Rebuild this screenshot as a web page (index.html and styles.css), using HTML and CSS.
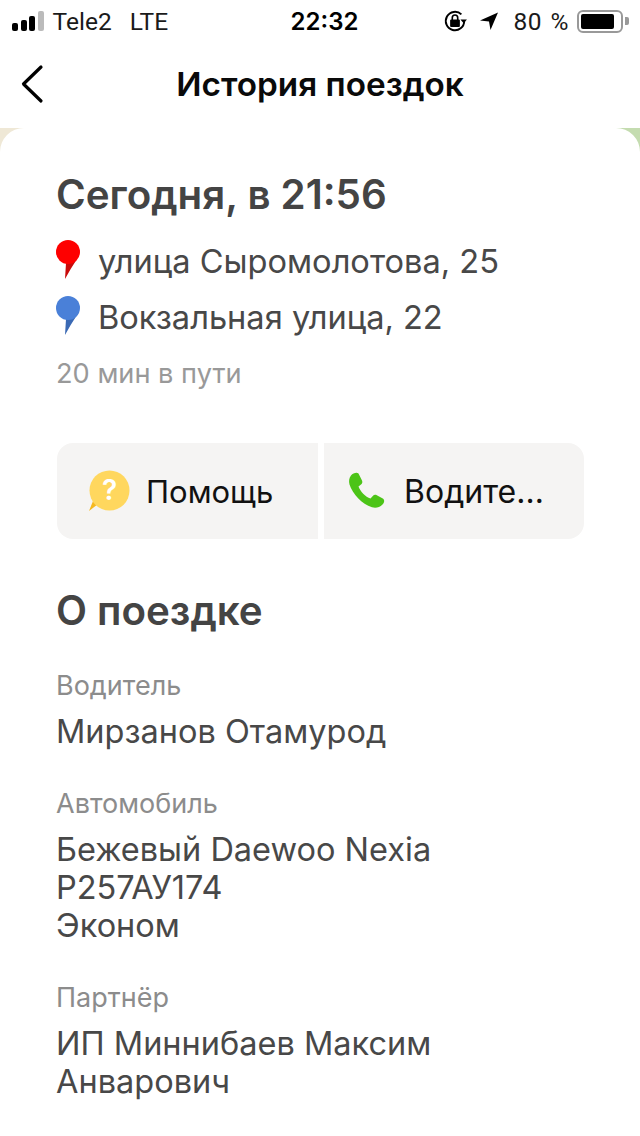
FILE: index.html
```html
<!DOCTYPE html>
<html lang="en">
<head>
    <meta charset="UTF-8">
    <meta name="viewport" content="width=device-width, initial-scale=1.0">
    <link rel="stylesheet" href="styles.css">
</head>
<body>
    <div class="phone">
        <div class="statusbar">
            <div class="status-left">
                <div class="signal"><i></i><i></i><i></i><i class="off"></i></div>
                <span class="carrier">Tele2</span>
                <span class="net">LTE</span>
            </div>
            <div class="clock">22:32</div>
            <div class="status-right">
                <svg class="lock" width="26" height="26" viewBox="0 0 24 24">
                    <path d="M20.500 12a8.500 8.500 0 1 1-2.600-6.100" fill="none" stroke="#000" stroke-width="1.800"/>
                    <path d="M17 10.500h6l-3 3.500z" fill="#000"/>
                    <rect x="7.500" y="10.500" width="9" height="7" rx="1" fill="#000"/>
                    <path d="M9.500 11V9a2.500 2.500 0 0 1 5 0v2" fill="none" stroke="#000" stroke-width="1.500"/>
                </svg>
                <svg class="arrow" width="20" height="20" viewBox="0 0 20 20">
                    <path d="M19 1.500 L1 9.500 L10 10.500 L11.500 19z" fill="#000"/>
                </svg>
                <span class="percent">80 %</span>
                <div class="battery"><div class="battery-fill"></div></div>
                <div class="battery-tip"></div>
            </div>
        </div>

        <div class="navbar">
            <svg class="back" width="26" height="40" viewBox="0 0 26 40">
                <path d="M21 3 L3.500 20 L21 37" fill="none" stroke="#000" stroke-width="3.200" stroke-linecap="round" stroke-linejoin="round"/>
            </svg>
            <h1>История поездок</h1>
        </div>

        <div class="map-strip">
            <div class="sheet">
                <h2 class="when">Сегодня, в 21:56</h2>

                <div class="route">
                    <svg class="pin" width="26" height="40" viewBox="0 0 26 40">
                        <path d="M11 23 L22 19 Q16 28 10 39z" fill="#c90a0a"/>
                        <circle cx="13" cy="12" r="12" fill="#fe0000"/>
                    </svg>
                    <span>улица Сыромолотова, 25</span>
                </div>
                <div class="route">
                    <svg class="pin" width="26" height="40" viewBox="0 0 26 40">
                        <path d="M11 23 L22 19 Q16 28 10 39z" fill="#3a69b4"/>
                        <circle cx="13" cy="12" r="12" fill="#4a80d8"/>
                    </svg>
                    <span>Вокзальная улица, 22</span>
                </div>
                <div class="duration">20 мин в пути</div>

                <div class="actions">
                    <div class="action action-help">
                        <svg width="42" height="42" viewBox="0 0 42 42">
                            <path d="M1 41l4-10h9z" fill="#f5b921"/>
                            <circle cx="21.500" cy="20.500" r="20" fill="#ffd75e"/>
                            <text class="qmark" x="21.500" y="30" text-anchor="middle">?</text>
                        </svg>
                        <span>Помощь</span>
                    </div>
                    <div class="action action-driver">
                        <svg width="38" height="38" viewBox="0 0 38 38">
                            <path d="M3 3.500C5 1 9 0 10.500 1.500l3.500 7c.7 1.600.3 3-1 4l-2.500 2c1.500 4.500 7 10.500 12 12l2.300-2.500c1-1.200 2.500-1.500 4-.8l6 3.300c2 1.200 1.800 4-.3 6-3 3-6.800 4-10.500 2.800C14 32 4.500 22 1.500 12.500.7 9 1 6 3 3.500z" fill="#4cc417"/>
                        </svg>
                        <span>Водите…</span>
                    </div>
                </div>

                <h2 class="about">О поездке</h2>

                <div class="info">
                    <div class="info-label">Водитель</div>
                    <div class="info-value">Мирзанов Отамурод</div>
                </div>
                <div class="info">
                    <div class="info-label">Автомобиль</div>
                    <div class="info-value">Бежевый Daewoo Nexia<br>Р257АУ174<br>Эконом</div>
                </div>
                <div class="info">
                    <div class="info-label">Партнёр</div>
                    <div class="info-value">ИП Миннибаев Максим<br>Анварович</div>
                </div>
            </div>
        </div>
    </div>
</body>
</html>
```

FILE: styles.css
```css
* {
    box-sizing: border-box;
}
html, body {
    margin: 0;
    padding: 0;
    background: #fff;
}
body {
    font-family: Inter, "Liberation Sans", Arial, sans-serif;
    width: 640px;
    height: 1136px;
    overflow: hidden;
}
.phone {
    display: flex;
    flex-direction: column;
    height: 1136px;
}

/* status bar */
.statusbar {
    flex-shrink: 0;
    height: 42px;
    display: flex;
    align-items: center;
    justify-content: space-between;
    padding: 0 11px 0 12px;
    font-family: Roboto, "Liberation Sans", sans-serif;
    font-size: 24.500px;
    color: #1a1a1a;
}
.status-left {
    width: 258px;
    display: flex;
    align-items: center;
}
.signal {
    display: flex;
    align-items: flex-end;
    gap: 2.500px;
    height: 20px;
    margin-right: 9px;
}
.signal i {
    width: 6px;
    background: #000;
    border-radius: 2px;
}
.signal i:nth-child(1) { height: 8px; }
.signal i:nth-child(2) { height: 11px; }
.signal i:nth-child(3) { height: 15px; }
.signal i:nth-child(4) { height: 20px; }
.signal .off {
    background: #bbb;
}
.net {
    margin-left: 18px;
}
.clock {
    font-family: Inter, "Liberation Sans", sans-serif;
    font-size: 24px;
    font-weight: 600;
    color: #000;
}
.status-right {
    width: 250px;
    display: flex;
    align-items: center;
    justify-content: flex-end;
}
.lock {
    margin-right: 11px;
}
.arrow {
    margin-right: 14px;
}
.percent {
    letter-spacing: 0.500px;
    word-spacing: 2px;
}
.battery {
    width: 46px;
    height: 23px;
    margin-left: 8px;
    border: 2px solid #999;
    border-radius: 6px;
    padding: 2px;
}
.battery-fill {
    width: 86%;
    height: 100%;
    background: #000;
    border-radius: 2px;
}
.battery-tip {
    width: 4px;
    height: 8px;
    margin-left: 2px;
    background: #999;
    border-radius: 0 2px 2px 0;
}

/* nav */
.navbar {
    flex-shrink: 0;
    height: 86px;
    padding-bottom: 2px;
    display: flex;
    align-items: center;
    justify-content: center;
    position: relative;
}
.navbar h1 {
    margin: 0;
    font-size: 33.300px;
    font-weight: 600;
    color: #0a0a0a;
}
.back {
    position: absolute;
    left: 20px;
    top: 22px;
}

/* sheet over the map */
.map-strip {
    flex: 1;
    min-height: 0;
    background: linear-gradient(90deg, #efe8d6 0, #efe8d6 50%, #c4dcb0 50%, #c4dcb0 100%);
}
.sheet {
    height: 100%;
    background: #fff;
    border-radius: 24px 24px 0 0;
    padding: 42px 56px 0 56px;
}
.when {
    margin: 0 0 13px;
    font-size: 40.300px;
    line-height: 50px;
    font-weight: 600;
    color: #444;
}
.route {
    height: 56px;
    display: flex;
    align-items: center;
    font-size: 32.600px;
    color: #484848;
}
.pin {
    margin: 0 17px 2px -1px;
}
.duration {
    margin-top: 11px;
    font-size: 27.200px;
    line-height: 36px;
    color: #999;
}
.actions {
    display: flex;
    gap: 6px;
    margin: 51px 0 0 1px;
}
.action {
    height: 96px;
    display: flex;
    align-items: center;
    background: #f5f4f3;
    font-size: 31px;
    color: #111;
}
.action-help {
    width: 261px;
    border-radius: 16px 0 0 16px;
    padding-left: 31px;
}
.action-help span {
    margin-left: 16px;
}
.action-driver {
    width: 260px;
    border-radius: 0 16px 16px 0;
    padding-left: 24px;
}
.action-driver span {
    margin-left: 18px;
    font-size: 32px;
}
.qmark {
    font-size: 28px;
    font-weight: 600;
    fill: #fff;
}
.about {
    margin: 47px 0 34px;
    font-size: 40.300px;
    line-height: 50px;
    font-weight: 600;
    color: #444;
}
.info {
    margin-bottom: 37px;
}
.info-label {
    font-size: 27px;
    line-height: 32px;
    color: #8c8c8c;
}
.info-value {
    margin-top: 11px;
    font-size: 32.500px;
    line-height: 38px;
    color: #484848;
}
```
